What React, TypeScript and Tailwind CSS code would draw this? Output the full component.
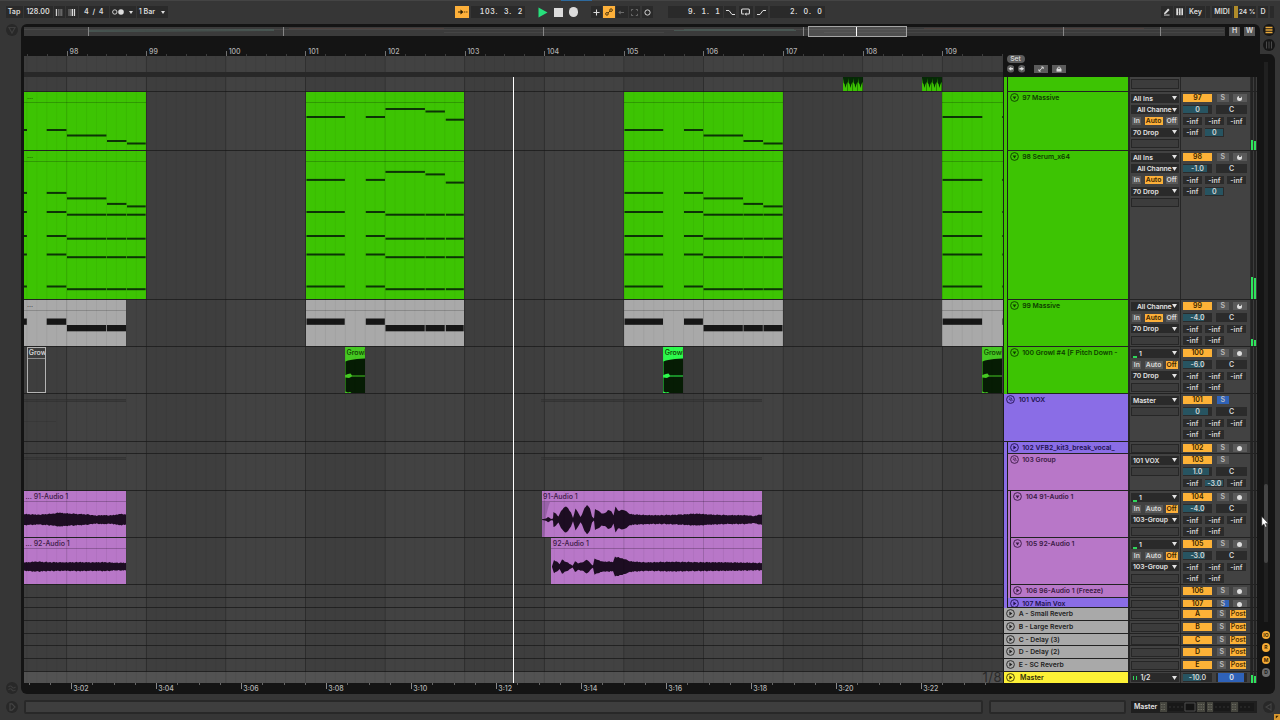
import clsx from 'clsx';
import React from 'react';

const BAR = 79.6;
const FIRST_BAR = 97;
const OFFSET = -36.9;
const LANE_W = 979;

type IoRow =
  | { kind: 'select'; text: string; indent?: boolean; meter?: boolean }
  | { kind: 'monitor'; active: 'In' | 'Auto' | 'Off' }
  | { kind: 'empty' };

type Track = {
  id: string;
  name: string;
  height: number;
  color: string;
  text: string;
  strips: string[];
  icon: 'down' | 'right' | 'group';
  io: IoRow[];
  solo?: 'off' | 'on' | 'half';
  arm?: 'midi' | 'audio';
  post?: boolean;
  volume?: string;
  fill?: number;
  sends?: string[][];
  level?: number;
};

const GREEN = 'bg-[#3dc403]';
const VIOLET = 'bg-[#8a6de6]';
const PINK = 'bg-[#b877c8]';
const GREY = 'bg-[#a9a9a9]';

const INF3 = ['-inf', '-inf', '-inf'];
const INF2 = ['-inf', '-inf'];

const select = (text: string, indent = false): IoRow => ({ kind: 'select', text, indent });
const input: IoRow = { kind: 'select', text: '1', meter: true };
const auto: IoRow = { kind: 'monitor', active: 'Auto' };
const off: IoRow = { kind: 'monitor', active: 'Off' };
const empty: IoRow = { kind: 'empty' };

const greenText = 'text-[#0d3d00]';
const violetText = 'text-[#21114f]';
const pinkText = 'text-[#3a1a44]';

const tracks: Track[] = [
  {
    id: '97', name: '97 Massive', height: 59, color: GREEN, text: greenText, strips: [GREEN], icon: 'down',
    io: [select('All Ins'), select('All Channe', true), auto, select('70 Drop'), empty],
    arm: 'midi', volume: '0', fill: 86, sends: [INF3, ['-inf', '0']], level: 10,
  },
  {
    id: '98', name: '98 Serum_x64', height: 149, color: GREEN, text: greenText, strips: [GREEN], icon: 'down',
    io: [select('All Ins'), select('All Channe', true), auto, select('70 Drop'), empty],
    arm: 'midi', volume: '-1.0', fill: 82, sends: [INF3, ['-inf', '0']], level: 22,
  },
  {
    id: '99', name: '99 Massive', height: 47, color: GREEN, text: greenText, strips: [GREEN], icon: 'down',
    io: [select('All Channe', true), auto, select('70 Drop'), empty],
    arm: 'midi', volume: '-4.0', fill: 73, sends: [INF3, INF2], level: 7,
  },
  {
    id: '100', name: '100 Growl #4 [F Pitch Down -', height: 47, color: GREEN, text: greenText, strips: [GREEN], icon: 'down',
    io: [input, off, select('70 Drop'), empty],
    arm: 'audio', volume: '-6.0', fill: 68, sends: [INF3, INF2],
  },
  {
    id: '101', name: '101 VOX', height: 48, color: VIOLET, text: violetText, strips: [], icon: 'group',
    io: [select('Master'), empty],
    solo: 'on', volume: '0', fill: 86, sends: [INF3, INF2],
  },
  {
    id: '102', name: '102 VFB2_kit3_break_vocal_', height: 12, color: VIOLET, text: violetText, strips: [VIOLET], icon: 'right',
    io: [empty], arm: 'audio',
  },
  {
    id: '103', name: '103 Group', height: 37, color: PINK, text: pinkText, strips: [VIOLET], icon: 'group',
    io: [select('101 VOX'), empty],
    volume: '1.0', fill: 89, sends: [['-inf', '-3.0', '-inf']],
  },
  {
    id: '104', name: '104 91-Audio 1', height: 47, color: PINK, text: pinkText, strips: [VIOLET, PINK], icon: 'down',
    io: [input, off, select('103-Group'), empty],
    arm: 'audio', volume: '-4.0', fill: 73, sends: [INF3, INF2],
  },
  {
    id: '105', name: '105 92-Audio 1', height: 47, color: PINK, text: pinkText, strips: [VIOLET, PINK], icon: 'down',
    io: [input, off, select('103-Group'), empty],
    arm: 'audio', volume: '-3.0', fill: 76, sends: [INF3, INF2],
  },
  {
    id: '106', name: '106 96-Audio 1 (Freeze)', height: 13, color: PINK, text: pinkText, strips: [VIOLET, PINK], icon: 'right',
    io: [empty], arm: 'audio',
  },
  {
    id: '107', name: '107 Main Vox', height: 10, color: VIOLET, text: violetText, strips: [VIOLET], icon: 'right',
    io: [empty], arm: 'audio', solo: 'half',
  },
  { id: 'A', name: 'A - Small Reverb', height: 13, color: GREY, text: 'text-[#222]', strips: [], icon: 'right', io: [empty], post: true },
  { id: 'B', name: 'B - Large Reverb', height: 13, color: GREY, text: 'text-[#222]', strips: [], icon: 'right', io: [empty], post: true },
  { id: 'C', name: 'C - Delay (3)', height: 12, color: GREY, text: 'text-[#222]', strips: [], icon: 'right', io: [empty], post: true },
  { id: 'D', name: 'D - Delay (2)', height: 13, color: GREY, text: 'text-[#222]', strips: [], icon: 'right', io: [empty], post: true },
  { id: 'E', name: 'E - SC Reverb', height: 13, color: GREY, text: 'text-[#222]', strips: [], icon: 'right', io: [empty], post: true },
];

/* ---------- clips ---------- */

// note = [x, y, width], relative to the clip
type Note = [number, number, number];

const FALLING = [27, 27, 32.5, 38, 40.5];
const RISING = [14, 14, 6, 8.5, 16.7];
const CHORD = [49, 73, 91.5, 123.5];

// note starts and widths for the four phrases in view
const phrases = [
  { left: 0, width: 122, xs: [[0, 3.3], [22.7, 20], [43, 39.7], [83, 19.7], [103, 19]], melody: FALLING },
  { left: 281.8, width: 158.2, xs: [[0.5, 38.7], [59.8, 19.5], [79.5, 39.7], [119.5, 19.7], [139.8, 18.4]], melody: RISING },
  { left: 599.6, width: 159.4, xs: [[0.5, 39], [60, 19.4], [79.6, 39.7], [119.5, 19.8], [139.5, 19.5]], melody: FALLING },
  { left: 918.2, width: 60.8, xs: [[0.6, 40], [60, 1]], melody: RISING },
];

type Phrase = (typeof phrases)[number];

const melodyNotes = (p: Phrase, dy: number): Note[] =>
  p.xs.map(([x, w], i) => [x, p.melody[i] + dy, w - 0.3]);

const chordNotes = (p: Phrase): Note[] =>
  CHORD.flatMap((y) => p.xs.map(([x, w], i): Note => [x, y + (i < 2 ? 0 : 2.7), w - 0.4]));

const bassNotes = (p: Phrase): Note[] =>
  p.xs.map(([x, w], i) => [x, i < 2 ? 7.5 : 14, w - 0.5]);

type MidiClipProps = {
  left: number;
  width: number;
  className: string;
  line: string;
  notes: Note[];
  noteHeight: number;
  noteColor: string;
  dots?: boolean;
};

const MidiClip = ({ left, width, className, line, notes, noteHeight, noteColor, dots }: MidiClipProps) => (
  <div className={clsx('absolute inset-y-0 flex flex-col overflow-hidden', className)} style={{ left, width }}>
    <div className={clsx('h-[11px] shrink-0 border-b pl-[3px] text-[7px] leading-[9px] text-black/70', line)}>
      {dots && '...'}
    </div>
    <svg className="w-full flex-1" fill={noteColor}>
      {notes.map(([x, y, w], i) => (
        <rect key={i} x={x} y={y} width={w} height={noteHeight} />
      ))}
    </svg>
  </div>
);

type Envelope = [number, number][];

const waveA: Envelope = [
  [0, 5.4], [15, 5], [28, 5.8], [36, 7], [42, 6.2], [55, 5.6], [65, 5], [70, 4], [80, 4.6], [88, 4], [95, 5.6], [102, 5],
];
const waveB: Envelope = [
  [0, 0.4], [3, 0.8], [6, 2.6], [9, 0.6], [11, 1], [11.5, 7.5], [14, 6], [16.5, 3], [19, 8.5], [21.5, 11.5], [24, 13], [26, 11.5],
  [29, 7], [31, 1.6], [33.5, 11], [35.5, 8], [38.5, 2.6], [40, 5], [42.5, 11.5], [45, 14.6], [48, 11], [50, 3], [52, 1],
  [53, 10.5], [56, 9], [59.5, 6], [63, 6.5], [66, 9.5], [69.5, 8], [71.5, 4], [73.5, 13], [76, 9], [81, 9.6], [84.5, 8.4],
  [88, 5.4], [105, 4.4], [121, 4.4], [138, 5], [155, 6], [168, 5], [188, 4.4], [205, 4.4], [212, 3.4], [217, 5], [221, 4.8],
];
const waveC: Envelope = [
  [0, 4], [12, 5], [25, 4.4], [40, 4.2], [55, 4.4], [70, 4.2], [82, 4.4], [92, 3.8], [102, 3.8],
];
const waveD: Envelope = [
  [1, 0.4], [3, 6.6], [6, 5], [8.5, 2.4], [11, 7.2], [13.5, 5.2], [17, 4.2], [20, 2], [21.5, 0.8], [24, 5.4], [27, 3.2], [31, 4],
  [35.5, 6.8], [38, 5.2], [40.5, 2.2], [42, 1.2], [43.5, 8.2], [47, 6.6], [52, 5], [57, 5], [62, 4.4], [64, 10], [70, 8.4],
  [75.5, 7], [79, 5.2], [95, 4.2], [122, 4.8], [145, 4.4], [178, 4.2], [211, 3.6],
];

// mirror the envelope round the centre line, with a little jitter on each edge
const wavePath = (env: Envelope, center: number) => {
  const dense: Envelope = [];
  env.forEach(([x, h], i) => {
    dense.push([x, h]);
    const next = env[i + 1];
    if (!next) return;
    const steps = Math.floor((next[0] - x) / 1.2);
    for (let s = 1; s < steps; s++) {
      const t = s / steps;
      const jitter = ((s * 7 + i * 3) % 5) * 0.22 - 0.44;
      dense.push([x + (next[0] - x) * t, Math.max(0.4, h + (next[1] - h) * t + jitter)]);
    }
  });
  const top = dense.map(([x, h]) => `${x.toFixed(1)},${(center - h).toFixed(1)}`);
  const bottom = dense.reverse().map(([x, h]) => `${x.toFixed(1)},${(center + h).toFixed(1)}`);
  return `M${top.join('L')}L${bottom.join('L')}Z`;
};

type AudioClipProps = { left: number; width: number; title: string; wave: Envelope; fade?: boolean };

const AudioClip = ({ left, width, title, wave, fade }: AudioClipProps) => (
  <div className="absolute inset-y-0 flex flex-col overflow-hidden bg-[#b877c8]" style={{ left, width }}>
    <div className="h-[11px] shrink-0 border-b border-[#8e5a9b] pl-[1.5px] text-[7px] leading-[11px] font-medium whitespace-nowrap text-[#3a1a44]">
      {title}
    </div>
    <svg className="w-full flex-1" fill="#1d0d22">
      {fade && <path d="M0 0H8Q5 8 3 20L2 36H0Z" fill="#9a62aa" />}
      <path d={wavePath(wave, 17.6)} />
    </svg>
  </div>
);

const GrowlClip = ({ left, bright }: { left: number; bright?: boolean }) => (
  <div
    className={clsx('absolute inset-y-0 flex flex-col overflow-hidden', bright ? 'bg-[#2dfa4c]' : 'bg-[#45c822]')}
    style={{ left, width: 20 }}
  >
    <div className="h-[11px] shrink-0 pl-[1.5px] text-[7px] leading-[12px] font-medium whitespace-nowrap text-[#0d3d00]">
      Growl
    </div>
    <svg className="w-full flex-1" fill="#061c04">
      <path d="M0.5 3.5L3 2.4L7 1.8L12 1L20 0.6V17.5H7L5.5 15.6L3 16L0.5 17Z" />
      <path d="M0.5 19.5L4 20L7 18.6L20 18.4V35H6.5L5 34L3 34.6L0.5 33.4Z" />
    </svg>
  </div>
);

const SnareClip = ({ left }: { left: number }) => (
  <svg className="absolute inset-y-0 h-full bg-[#052a05]" style={{ left, width: 20 }} fill="#3dc403">
    {[0, 5, 10, 15].map((x) => (
      <path key={x} d={`M${x} 15V1L${x + 0.7} 6L${x + 1.6} 7L${x + 2.4} 11L${x + 3.2} 8L${x + 4} 6L${x + 4.6} 5V15Z`} />
    ))}
  </svg>
);

const GhostLines = ({ y, left, width }: { y: number; left: number; width: number }) => (
  <div className="absolute h-[3px] border-y border-[#343434] bg-[#393939]" style={{ top: y, left, width }} />
);

const laneClips = (id: string) => {
  switch (id) {
    case '97':
      return phrases.map((p, i) => (
        <MidiClip
          key={i}
          left={p.left}
          width={p.width}
          className={GREEN}
          line="border-[#2f9a02]"
          notes={melodyNotes(p, -1)}
          noteHeight={2}
          noteColor="#0c3306"
          dots={i === 0}
        />
      ));
    case '98':
      return phrases.map((p, i) => (
        <MidiClip
          key={i}
          left={p.left}
          width={p.width}
          className={GREEN}
          line="border-[#2f9a02]"
          notes={[...melodyNotes(p, 2.9), ...chordNotes(p)]}
          noteHeight={2}
          noteColor="#0c3306"
          dots={i === 0}
        />
      ));
    case '99':
      return phrases.map((p, i) => (
        <MidiClip
          key={i}
          left={p.left}
          width={i === 0 ? 102.3 : p.width}
          className={GREY}
          line="border-[#8a8a8a]"
          notes={bassNotes(p)}
          noteHeight={6.3}
          noteColor="#161616"
          dots={i === 0}
        />
      ));
    case '100':
      return (
        <>
          <div className="absolute inset-y-0 left-[2.7px] w-[19.3px] overflow-hidden border border-[#b4b4b4]">
            <div className="h-[10.5px] border-b border-[#8c8c8c] pl-px text-[7px] leading-[10px] font-semibold text-[#d0d0d0]">
              Growl
            </div>
          </div>
          <GrowlClip left={321} />
          <GrowlClip left={639.3} bright />
          <GrowlClip left={958.3} />
        </>
      );
    case '101':
      return (
        <>
          <GhostLines y={5} left={0} width={102} />
          <GhostLines y={5} left={517} width={221} />
          <div className="absolute top-[27px] left-0 h-px w-[32px] bg-[#383838]" />
        </>
      );
    case '103':
      return (
        <>
          <GhostLines y={3} left={0} width={102} />
          <GhostLines y={3} left={517} width={221} />
        </>
      );
    case '104':
      return (
        <>
          <AudioClip left={0} width={102} title="... 91-Audio 1" wave={waveA} />
          <AudioClip left={517.6} width={220.8} title="91-Audio 1" wave={waveB} fade />
        </>
      );
    case '105':
      return (
        <>
          <AudioClip left={0} width={102} title="... 92-Audio 1" wave={waveC} />
          <AudioClip left={527.3} width={211} title="92-Audio 1" wave={waveD} />
        </>
      );
    default:
      return null;
  }
};

/* ---------- track headers ---------- */

const FoldIcon = ({ icon }: { icon: Track['icon'] }) => (
  <svg viewBox="0 0 9 9" className="size-[9px] shrink-0" fill="none" stroke="currentColor" strokeWidth="0.9">
    <circle cx="4.5" cy="4.5" r="3.9" />
    {icon === 'down' && <path d="M2.6 3.4H6.4L4.5 6.4Z" fill="currentColor" stroke="none" />}
    {icon === 'right' && <path d="M3.4 2.5V6.5L6.4 4.5Z" fill="currentColor" stroke="none" />}
    {icon === 'group' && <path d="M2.8 3L5.4 3L6.2 6M2.8 4.6L4.4 4.6L5 6.4" strokeWidth="0.7" />}
  </svg>
);

const Row = ({ children }: { children?: React.ReactNode }) => (
  <div className="flex h-[11.35px] shrink-0 items-center">{children}</div>
);

const InfoRow = ({ row }: { row: IoRow }) => {
  if (row.kind === 'empty') {
    return (
      <Row>
        <div className="h-[9px] w-full border border-[#262626] bg-[#3c3c3c]" />
      </Row>
    );
  }
  if (row.kind === 'monitor') {
    return (
      <Row>
        <div className="flex w-full justify-between px-px text-center text-[6.8px] leading-[8px] font-semibold">
          {['In', 'Auto', 'Off'].map((label) => (
            <span
              key={label}
              className={clsx(
                'h-[8px]',
                label === 'In' ? 'w-[9px]' : label === 'Auto' ? 'w-[18px]' : 'w-[12px]',
                label === row.active ? 'bg-[#fdb03a] text-[#3a2400]' : 'bg-[#5a5a5a] text-[#dadada]'
              )}
            >
              {label}
            </span>
          ))}
        </div>
      </Row>
    );
  }
  return (
    <Row>
      <div className="flex h-[9px] w-full items-center bg-[#2a2a2a] pr-[2px] pl-[1.5px]">
        {row.meter && <span className="mr-[2px] h-[2px] w-[4px] self-end bg-[#2fd65a]" />}
        <span
          className={clsx(
            'flex-1 text-[6.8px] leading-[9px] font-semibold whitespace-nowrap text-[#e4e4e4]',
            row.indent && 'ml-[4px] text-[6.4px] tracking-[-0.1px]'
          )}
        >
          {row.text}
        </span>
        <svg viewBox="0 0 5 4" className="h-[4px] w-[5px] shrink-0" fill="#e4e4e4">
          <path d="M0 0H5L2.5 4Z" />
        </svg>
      </div>
    </Row>
  );
};

const Field = ({ value, fill, className }: { value: string; fill?: number; className: string }) => (
  <div className={clsx('relative h-[8.5px] bg-[#2b2b2b] text-center text-[7px] leading-[9px] font-semibold text-[#d6d6d6]', className)}>
    {fill !== undefined && <div className="absolute inset-y-px left-0 bg-[#275461]" style={{ width: `${fill}%` }} />}
    <span className="relative">{value}</span>
  </div>
);

const Meter = ({ level = 0 }: { level?: number }) => (
  <div className="flex w-[7px] gap-px border-l border-[#2a2a2a] bg-[#3c3c3c]">
    {[0, 1].map((i) => (
      <div key={i} className="flex w-[2px] flex-col justify-end bg-[#232323]">
        <div className="bg-[#2ee35c]" style={{ height: Math.max(0, level - i) }} />
      </div>
    ))}
  </div>
);

const Mixer = ({ track }: { track: Track }) => (
  <div className="flex w-[69px] flex-col overflow-hidden pt-[0.6px] pl-[1.7px]">
    <Row>
      <div className="h-[8px] w-[29.6px] bg-[#fdb237] text-center text-[7px] leading-[8.5px] font-semibold text-[#3a2400]">
        {track.id}
      </div>
      <div
        className={clsx(
          'h-[8px] text-center text-[7px] leading-[8.5px] font-semibold text-[#bdbdbd]',
          track.post ? 'ml-[5px] w-[9px]' : 'ml-[4.4px] w-[12.3px]',
          track.solo === 'on' && 'bg-[#2f62b8]',
          track.solo === 'half' && 'bg-linear-to-r from-[#5a5a5a] from-50% to-[#2f62b8] to-50%',
          !track.solo && 'bg-[#5a5a5a]'
        )}
      >
        S
      </div>
      {track.arm && (
        <div className="ml-[3.7px] flex h-[8px] w-[14px] items-center justify-center bg-[#5a5a5a]">
          <div className="flex size-[5px] items-center justify-center rounded-full bg-[#dedede]">
            {track.arm === 'midi' && <div className="mb-[2px] h-[2px] w-[2px] bg-[#5a5a5a]" />}
          </div>
        </div>
      )}
      {track.post && (
        <div className="ml-[4px] h-[8px] w-[16px] bg-[#fdb237] text-center text-[7px] leading-[8.5px] font-medium text-[#3a2400]">
          Post
        </div>
      )}
    </Row>
    {track.volume && (
      <Row>
        <Field value={track.volume} fill={track.fill} className="w-[29.6px]" />
        <Field value="C" className="ml-[4px] w-[30.4px]" />
      </Row>
    )}
    {track.sends?.map((sends, i) => (
      <Row key={i}>
        <div className="flex gap-[2.6px]">
          {sends.map((value, j) => (
            <Field key={j} value={value} fill={value === '-inf' ? undefined : 92} className="w-[19.4px]" />
          ))}
        </div>
      </Row>
    ))}
  </div>
);

const TrackRow = ({ track }: { track: Track }) => (
  <div className="flex border-b border-[#222]" style={{ height: track.height }}>
    <div className="relative w-[979px] shrink-0 overflow-hidden">{laneClips(track.id)}</div>
    <div className="flex w-[125px] shrink-0 bg-[#1c1c1c] pl-[1.3px]">
      {track.strips.map((strip, i) => (
        <div key={i} className={clsx('mr-[1px] -mb-px w-[2.5px] shrink-0', strip)} />
      ))}
      <div className={clsx('flex flex-1 overflow-hidden pl-[1.8px]', track.color, track.text)}>
        <div className="flex h-[11.35px] items-center gap-[3.6px]">
          <FoldIcon icon={track.icon} />
          <span className="text-[6.8px] leading-[10px] font-semibold whitespace-nowrap">{track.name}</span>
        </div>
      </div>
    </div>
    <div className="flex w-[52px] flex-col overflow-hidden border-l-2 border-[#262626] bg-[#424242] px-[1.4px] pt-[0.6px]">
      {track.io.map((row, i) => (
        <InfoRow key={i} row={row} />
      ))}
    </div>
    <div className="flex flex-1 border-l border-[#262626] bg-[#424242]">
      <Mixer track={track} />
      <Meter level={track.level} />
    </div>
  </div>
);

const MasterRow = () => (
  <div className="flex h-[11px]">
    <div className="flex w-[979px] justify-end bg-[#525252] pr-px text-[13px] leading-[11px] tracking-[0.5px] text-[#2a2a2a]">
      1/8
    </div>
    <div className="flex w-[125px] bg-[#1c1c1c] pl-[1.3px]">
      <div className="flex flex-1 items-center gap-[5px] bg-[#fdf136] pl-[1.8px] text-[#33300a]">
        <FoldIcon icon="right" />
        <span className="text-[7px] leading-[10px] font-semibold">Master</span>
      </div>
    </div>
    <div className="flex w-[52px] items-center border-l-2 border-[#262626] bg-[#424242] px-[1.4px]">
      <div className="flex h-[9px] w-full items-center bg-[#2a2a2a] pr-[2px] pl-[2px]">
        <span className="mr-[3px] h-[4px] w-[4px] border-x-[1.5px] border-[#2fd65a]" />
        <span className="flex-1 text-[7px] leading-[9px] font-semibold text-[#e4e4e4]">1/2</span>
        <svg viewBox="0 0 5 4" className="h-[4px] w-[5px]" fill="#e4e4e4">
          <path d="M0 0H5L2.5 4Z" />
        </svg>
      </div>
    </div>
    <div className="flex flex-1 border-l border-[#262626] bg-[#424242]">
      <div className="flex w-[69px] items-center pl-[1.7px]">
        <Field value="-10.0" fill={62} className="w-[29.6px]" />
        <div className="ml-[4px] h-[8.5px] w-[30.4px] bg-[#2b2b2b]">
          <div className="mx-auto h-full w-[26px] bg-[#2f62b8] text-center text-[7px] leading-[9px] font-semibold text-[#e8e8e8]">
            0
          </div>
        </div>
      </div>
      <Meter level={8} />
    </div>
  </div>
);

/* ---------- arrangement ---------- */

const barX = (bar: number) => OFFSET + (bar - FIRST_BAR) * BAR;

const GridShade = () => (
  <svg className="absolute inset-0 h-full w-[979px]">
    {Array.from({ length: 13 }, (_, i) => (
      <rect key={i} x={barX(FIRST_BAR + i)} width={BAR} height="100%" fill={i % 2 ? '#424242' : '#3e3e3e'} />
    ))}
  </svg>
);

const GridLines = () => (
  <svg className="pointer-events-none absolute inset-y-0 left-0 h-full w-[979px]" stroke="#000">
    {Array.from({ length: 13 * 8 }, (_, i) => {
      const x = OFFSET + (i * BAR) / 8;
      if (x < 0 || x > LANE_W) return null;
      return <path key={i} d={`M${x.toFixed(1)} 0V700`} strokeOpacity={i % 8 === 0 ? 0.15 : i % 2 === 0 ? 0.06 : 0.04} />;
    })}
  </svg>
);

const BarRuler = () => (
  <div className="h-[20px] w-[979px] overflow-hidden">
    <div className="-ml-[36.9px] flex h-full w-[1035px] items-end">
      {Array.from({ length: 13 }, (_, i) => (
        <div key={i} className="flex h-[9px] w-[79.6px] shrink-0 items-end">
          <div className="flex h-[5px] w-[19.9px] shrink-0 items-end border-l border-[#707070]">
            {i > 0 && (
              <span className="pl-[1.8px] text-[7px] leading-[8px] font-medium text-[#b0b0b0]">{FIRST_BAR + i}</span>
            )}
          </div>
          <div className="h-[2px] w-[19.9px] border-l border-[#3c3c3c]" />
          <div className="h-[2px] w-[19.9px] border-l border-[#3c3c3c]" />
          <div className="h-[2px] w-[19.9px] border-l border-[#3c3c3c]" />
        </div>
      ))}
    </div>
  </div>
);

const times = ['3:02', '3:04', '3:06', '3:08', '3:10', '3:12', '3:14', '3:16', '3:18', '3:20', '3:22'];

const TimeRuler = () => (
  <div className="h-[11px] w-[979px] overflow-hidden">
    <div className="flex pl-[4.9px]">
      <div className="h-[2px] w-[21.2px] shrink-0 border-l border-[#666]" />
      <div className="h-[2px] w-[21.2px] shrink-0 border-l border-[#666]" />
      {times.map((time) => (
        <div key={time} className="flex w-[85px] shrink-0">
          <div className="h-[6px] w-[21.2px] border-l border-[#888]">
            <span className="block pt-[1px] pl-px text-[7px] leading-[9px] font-medium text-[#b5b5b5]">{time}</span>
          </div>
          <div className="h-[2px] w-[21.2px] border-l border-[#666]" />
          <div className="h-[2px] w-[21.2px] border-l border-[#666]" />
          <div className="h-[2px] w-[21.2px] border-l border-[#666]" />
        </div>
      ))}
    </div>
  </div>
);

const Overview = () => (
  <div className="flex h-[12px] items-start gap-[4px] pt-[3px]">
    <div className="relative h-[8.5px] w-[1201px] bg-[#3b3b3b]">
      <svg className="h-full w-full" fill="none">
        <path d="M0 2.5H1200" stroke="#474747" />
        <path d="M64 3.5L120 3L250 2.5M64 4.5L250 3.5M650 3.5H772M660 2.5H770" stroke="#4b5d58" strokeWidth="0.8" />
        <path d="M265 1.5H420M900 1.5H1120" stroke="#5a4440" strokeWidth="0.6" />
        <path d="M420 5.5H640M800 5.5H1200" stroke="#474747" strokeWidth="0.8" />
        <path d="M64.5 0V9M259.5 0V9M519.5 0V9M779.5 0V9M1039.5 0V9M1136.5 0V9" stroke="#868686" />
      </svg>
      <div className="absolute -top-px left-[784px] h-[10.5px] w-[99px] border border-[#a5a5a5] bg-white/10" />
      <div className="absolute inset-y-0 left-[832px] w-px bg-white" />
    </div>
    {['H', 'W'].map((label) => (
      <div key={label} className="h-[8.5px] w-[11px] bg-[#585858] text-center text-[7px] leading-[8.5px] font-semibold text-[#dcdcdc]">
        {label}
      </div>
    ))}
  </div>
);

const SetControls = () => (
  <div className="-mt-px flex flex-1 flex-col gap-[2px] pl-[3.5px]">
    <div className="h-[8px] w-[18px] rounded-full bg-[#5c5c5c] text-center text-[6.8px] leading-[8px] font-medium text-[#dcdcdc]">
      Set
    </div>
    <div className="flex items-center">
      <svg viewBox="0 0 8 8" className="size-[7.5px]">
        <circle cx="4" cy="4" r="4" fill="#5c5c5c" />
        <path d="M1.5 4L4.5 1.8V3.2H6.5V4.8H4.5V6.2Z" fill="#ddd" />
      </svg>
      <svg viewBox="0 0 8 8" className="ml-[3.5px] size-[7.5px]">
        <circle cx="4" cy="4" r="4" fill="#5c5c5c" />
        <path d="M6.5 4L3.5 1.8V3.2H1.5V4.8H3.5V6.2Z" fill="#ddd" />
      </svg>
      <svg viewBox="0 0 14 8" className="ml-[8.5px] h-[8px] w-[14px] bg-[#5c5c5c]">
        <path d="M5 6L9 2.2M7.2 2H9.2V4M4.9 4.2V6.1H6.8" fill="none" stroke="#ddd" strokeWidth="0.9" />
      </svg>
      <svg viewBox="0 0 14 8" className="ml-[4px] h-[8px] w-[14px] bg-[#5c5c5c]">
        <path d="M4.5 3.8H9.5V6.6H4.5Z" fill="#ddd" />
        <path d="M5.6 4V2.8Q7 1 8.4 2.8V4" fill="none" stroke="#ddd" strokeWidth="0.9" />
      </svg>
    </div>
  </div>
);

const Arrangement = () => (
  <div className="flex w-[1239px] flex-col rounded-tl-md rounded-tr-md rounded-bl-md bg-[#141414] pl-[3px]">
    <Overview />
    <BarRuler />
    <div className="flex h-[21px]">
      <div className="w-[979px] bg-[#282828]">
        <div className="relative h-[16px]">
          <GridShade />
          <GridLines />
        </div>
      </div>
      <SetControls />
    </div>
    <div className="relative w-[1233px]">
      <GridShade />
      <div className="relative">
        <div className="flex h-[15px] border-b border-[#222]">
          <div className="relative w-[979px] overflow-hidden">
            <SnareClip left={819} />
            <SnareClip left={898} />
          </div>
          <div className="flex w-[125px] bg-[#1c1c1c] pl-[1.3px]">
            <div className={clsx('mr-px -mb-px w-[2.5px]', GREEN)} />
            <div className={clsx('flex-1', GREEN)} />
          </div>
          <div className="w-[52px] border-l-2 border-[#262626] bg-[#424242] px-[1.4px] pt-[2px]">
            <div className="h-[10px] border border-[#262626] bg-[#3c3c3c]" />
          </div>
          <div className="flex flex-1 border-l border-[#262626] bg-[#424242]">
            <div className="w-[69px]" />
            <Meter />
          </div>
        </div>
        {tracks.map((track) => (
          <TrackRow key={track.id} track={track} />
        ))}
        <MasterRow />
        <GridLines />
        <div className="absolute inset-y-0 left-[489px] w-[1.3px] bg-white" />
      </div>
    </div>
    <TimeRuler />
  </div>
);

const sectionButtons = [
  { label: 'IO', on: true },
  { label: 'R', on: true },
  { label: 'M', on: true },
  { label: 'D', on: false },
];

const RightRail = () => (
  <div className="flex w-[20px] flex-col">
    <div className="flex h-[30px] flex-col items-center gap-[3px] pr-[2px]">
      <svg viewBox="0 0 12 12" className="size-[12px]">
        <circle cx="6" cy="6" r="6" fill="#161616" />
        <path d="M2.5 3.5H9.5M2.5 6H9.5M2.5 8.5H9.5" stroke="#e9a93a" strokeWidth="1.3" />
      </svg>
      <svg viewBox="0 0 12 12" className="size-[12px]">
        <circle cx="6" cy="6" r="6" fill="#161616" />
        <path d="M3.5 2.5V9.5M6 2.5V9.5M8.5 2.5V9.5" stroke="#4a4a4a" strokeWidth="1" />
      </svg>
    </div>
    <div className="flex w-[15px] flex-1 flex-col items-center rounded-tr-md rounded-br-md bg-[#141414] pr-[3px]">
      <div className="mt-[8px] h-[560px] w-[4px] bg-[#202020] pt-[422px]">
        <div className="h-[79px] rounded-full bg-[#444]" />
      </div>
      <div className="mt-[8.5px] flex flex-col gap-[4px]">
        {sectionButtons.map(({ label, on }) => (
          <div
            key={label}
            className={clsx(
              'size-[8.6px] rounded-full text-center text-[5px] leading-[8.6px] font-bold',
              on ? 'bg-[#f5ab35] text-[#3a2400]' : 'bg-[#6d6d6d] text-[#1a1a1a]'
            )}
          >
            {label}
          </div>
        ))}
      </div>
    </div>
  </div>
);

/* ---------- control bar ---------- */

const Box = ({ className, children }: { className?: string; children?: React.ReactNode }) => (
  <div className={clsx('flex h-[11.5px] items-center justify-center bg-[#2a2a2a] text-[7.1px] leading-none font-semibold whitespace-pre text-[#dcdcdc]', className)}>
    {children}
  </div>
);

const Caret = ({ className }: { className?: string }) => (
  <svg viewBox="0 0 4 3" className={clsx('h-[3px] w-[4px]', className)} fill="#dcdcdc">
    <path d="M0 0H4L2 3Z" />
  </svg>
);

const Digits = ({ values, className }: { values: string[]; className: string }) => (
  <Box className={clsx('gap-[5.8px] pr-[2px] tabular-nums', className)}>
    {values.map((v, i) => (
      <span key={i} className="tracking-[0.7px]">
        {v}
      </span>
    ))}
  </Box>
);

const ControlBar = () => (
  <div className="relative flex h-[24px] items-center border-t border-[#444] pb-px text-[#dcdcdc]">
    <div className="absolute -top-px left-[561px] h-px w-[31px] bg-[#2e6a9e]" />
    <div className="flex w-[455px] gap-px pl-[5.5px]">
      <Box className="w-[17px]">Tap</Box>
      <Box className="w-[29px]">128.00</Box>
      <Box className="w-[11.5px]">
        <svg viewBox="0 0 8 8" className="h-[7px] w-[8px]" stroke="#dcdcdc">
          <path d="M1 0V8" strokeWidth="1.3" />
          <path d="M3.2 0V8M5.2 0V8M7.2 0V8" strokeWidth="0.8" strokeOpacity="0.7" />
        </svg>
      </Box>
      <Box className="w-[12px]">
        <svg viewBox="0 0 8 8" className="h-[7px] w-[8px]" stroke="#dcdcdc">
          <path d="M0.6 0V8M2.6 0V8" strokeWidth="0.8" strokeOpacity="0.7" />
          <path d="M4.4 0V8M6.8 0V8" strokeWidth="1.5" />
        </svg>
      </Box>
      <Box className="w-[29.5px]">4  /  4</Box>
      <Box className="w-[26px]">
        <svg viewBox="0 0 12 6" className="h-[6px] w-[12px]">
          <circle cx="2.8" cy="3" r="2.2" fill="none" stroke="#dcdcdc" strokeWidth="0.9" />
          <circle cx="9" cy="3" r="2.8" fill="#dcdcdc" />
        </svg>
        <Caret className="ml-[5px]" />
      </Box>
      <Box className="w-[31px]">
        1 Bar
        <Caret className="ml-[6px]" />
      </Box>
    </div>

    <Box className="w-[14px] bg-[#fdb03a]">
      <svg viewBox="0 0 11 6" className="h-[6px] w-[11px]" fill="#2b1c00">
        <path d="M1 2.5H3.5V0.5L6.5 3L3.5 5.5V3.5H1Z" />
        <path d="M7.2 2.5H8.3V3.5H7.2ZM9.3 2.5H10.4V3.5H9.3Z" />
      </svg>
    </Box>
    <Digits values={['103.', '3.', '2']} className="ml-[2px] w-[54px] justify-end" />
    <svg viewBox="0 0 10 11" className="ml-[12.6px] h-[11px] w-[10px]" fill="#27e07c">
      <path d="M0.5 0.5L9.5 5.5L0.5 10.5Z" />
    </svg>
    <div className="ml-[6px] size-[9px] bg-[#dcdcdc]" />
    <div className="ml-[6px] size-[9.5px] rounded-full bg-[#dcdcdc]" />
    <Box className="ml-[13px] w-[11px]">
      <svg viewBox="0 0 8 8" className="size-[7px]" stroke="#dcdcdc" strokeWidth="1.2">
        <path d="M4 0.5V7.5M0.5 4H7.5" />
      </svg>
    </Box>
    <Box className="ml-px w-[11.5px] bg-[#fdb03a]">
      <svg viewBox="0 0 9 9" className="size-[8px]" fill="none" stroke="#2b1c00" strokeWidth="0.9">
        <circle cx="2.2" cy="6.6" r="1.5" />
        <circle cx="6.8" cy="2.4" r="1.5" />
        <path d="M3.4 5.6L5.6 3.4" />
      </svg>
    </Box>
    <Box className="ml-[1.5px] w-[11.5px]">
      <svg viewBox="0 0 8 6" className="h-[5px] w-[7px]" fill="#6a6a6a">
        <path d="M0 3L3 0.5V2.4H7V3.6H3V5.5Z" />
      </svg>
    </Box>
    <Box className="ml-px w-[11px]">
      <svg viewBox="0 0 8 8" className="size-[7px]" fill="none" stroke="#7a7a7a" strokeWidth="0.9">
        <path d="M0.5 2.5V0.5H2.5M5.5 0.5H7.5V2.5M7.5 5.5V7.5H5.5M2.5 7.5H0.5V5.5" />
      </svg>
    </Box>
    <Box className="ml-[2px] w-[11px]">
      <svg viewBox="0 0 8 8" className="size-[7px]" fill="none" stroke="#dcdcdc" strokeWidth="1.1">
        <circle cx="4" cy="4" r="3" />
      </svg>
    </Box>
    <Digits values={['9.', '1.', '1']} className="ml-[15px] w-[55px] justify-end" />
    <Box className="ml-[1.5px] w-[12px]">
      <svg viewBox="0 0 9 7" className="h-[7px] w-[9px]" fill="none" stroke="#dcdcdc" strokeWidth="1">
        <path d="M0 1.5H3L6 5.5H9" />
      </svg>
    </Box>
    <Box className="ml-[2.5px] w-[14px]">
      <svg viewBox="0 0 9 8" className="h-[8px] w-[9px]" fill="none" stroke="#dcdcdc" strokeWidth="1.1">
        <path d="M3 6H1.6Q0.6 6 0.6 5V2Q0.6 1 1.6 1H7.4Q8.4 1 8.4 2V5Q8.4 6 7.4 6H5.5" />
        <path d="M5.6 4.4V7.8L3.4 6.1Z" fill="#dcdcdc" stroke="none" />
      </svg>
    </Box>
    <Box className="ml-[2px] w-[13px]">
      <svg viewBox="0 0 9 7" className="h-[7px] w-[9px]" fill="none" stroke="#dcdcdc" strokeWidth="1">
        <path d="M0 5.5H3L6 1.5H9" />
      </svg>
    </Box>
    <Digits values={['2.', '0.', '0']} className="ml-[2px] w-[55px] justify-end" />

    <div className="ml-auto flex pr-[6px]">
      <Box className="w-[12px]">
        <svg viewBox="0 0 8 8" className="size-[7.5px]" fill="#dcdcdc">
          <path d="M1.4 5L5.4 0.6L7 2L3 6.2L1 6.6Z" />
          <path d="M1 7H7V8H1Z" />
        </svg>
      </Box>
      <Box className="ml-px w-[11px]">
        <svg viewBox="0 0 8 8" className="size-[7.5px]">
          <path d="M0.3 0.3H7.7V7.7H0.3Z" fill="#dcdcdc" />
          <path d="M2.7 4.6V8M5.3 4.6V8M2.7 0.3V4.6M5.3 0.3V4.6" stroke="#2a2a2a" strokeWidth="0.9" />
        </svg>
      </Box>
      <Box className="ml-px w-[19px]">Key</Box>
      <Box className="ml-px w-[4px]" />
      <Box className="ml-[2px] w-[20px]">MIDI</Box>
      <Box className="ml-px w-[23px]">
        <span className="h-full w-[4px] bg-[#b08c2a]" />
        <span className="pl-px text-[6.6px]">24 %</span>
      </Box>
      <Box className="ml-[2px] w-[10px]">D</Box>
      <Box className="ml-[2px] w-[4px]" />
    </div>
  </div>
);

const LeftRail = () => (
  <div className="flex w-[21px] flex-col items-center justify-between pl-[3px]">
    <svg viewBox="0 0 12 12" className="size-[12px]">
      <circle cx="6" cy="6" r="6" fill="#282828" />
      <path d="M3 3.5H9L6 9Z" fill="none" stroke="#3e3e3e" strokeWidth="1.2" />
    </svg>
    <svg viewBox="0 0 12 12" className="size-[12px]">
      <circle cx="6" cy="6" r="6" fill="#282828" />
      <path d="M2.5 5Q4.5 3 6 5T9.5 5M2.5 7.8Q4.5 5.8 6 7.8T9.5 7.8" fill="none" stroke="#3e3e3e" strokeWidth="1.1" />
    </svg>
  </div>
);

const BottomBar = () => (
  <div className="flex h-[26px] items-center">
    <svg viewBox="0 0 12 12" className="ml-[6px] size-[12px]">
      <circle cx="6" cy="6" r="6" fill="#282828" />
      <path d="M4 2.8H6L9 6L6 9.2H4Z" fill="none" stroke="#444" strokeWidth="1.2" />
    </svg>
    <div className="ml-[6px] h-[14px] w-[959px] rounded-xs border-2 border-[#282828] bg-[#3e3e3e]" />
    <div className="ml-[6px] h-[14px] w-[137px] rounded-xs border-2 border-[#282828] bg-[#3e3e3e]" />
    <div className="ml-[5px] flex h-[12px] w-[126px] items-center bg-[#1f1f1f] pl-[3px]">
      <span className="w-[26px] text-[6.9px] font-semibold text-[#e4e4e4]">Master</span>
      <svg className="h-[12px] w-[97px]">
        <path d="M0 1H7V11H0ZM37 1H45V11H37ZM47 1H53V11H47ZM71 1H78V11H71Z" fill="#45453e" />
        <path d="M1 3.5H6M1 6H6M1 8.5H6M38 3.5H44M38 6H44M38 8.5H44M48 3.5H52M48 6H52M48 8.5H52M72 3.5H77M72 6H77M72 8.5H77" stroke="#75756a" strokeWidth="0.8" strokeDasharray="1.5 1" />
        <path d="M8 2H24V10H8ZM54 2H70V10H54ZM79 2H94V10H79Z" fill="#181818" />
        <path d="M9 6H23M55 6H69M80 6H92" stroke="#333" strokeDasharray="2 2" />
        <path d="M25 2H35V10H25Z" fill="#141414" stroke="#4d4d4d" />
      </svg>
    </div>
    <svg viewBox="0 0 12 12" className="ml-[6px] size-[12px]">
      <circle cx="6" cy="6" r="6" fill="#282828" />
      <path d="M8 3L3 6L8 9Z" fill="none" stroke="#444" strokeWidth="1.1" />
    </svg>
  </div>
);

const App = () => (
  <div className="relative flex h-[720px] w-[1280px] flex-col overflow-hidden bg-[#363636] font-['Inter',sans-serif]">
    <ControlBar />
    <div className="flex h-[670px]">
      <LeftRail />
      <Arrangement />
      <RightRail />
    </div>
    <BottomBar />
    <svg viewBox="0 0 8 12" className="absolute top-[516px] left-[1261px] h-[12px] w-[8px]">
      <path d="M0.8 0.6V9.8L2.9 7.9L4.3 11.2L5.8 10.5L4.4 7.4H7.3Z" fill="#fff" stroke="#222" strokeWidth="0.5" />
    </svg>
    <svg viewBox="0 0 6 6" className="absolute right-0 bottom-0 size-[6px]">
      <path d="M0 0H6V6H0Z" fill="#d9982f" />
      <path d="M1.8 1.8H4.6L1.8 4.6Z" fill="#2b1c00" />
    </svg>
  </div>
);

export default App;
